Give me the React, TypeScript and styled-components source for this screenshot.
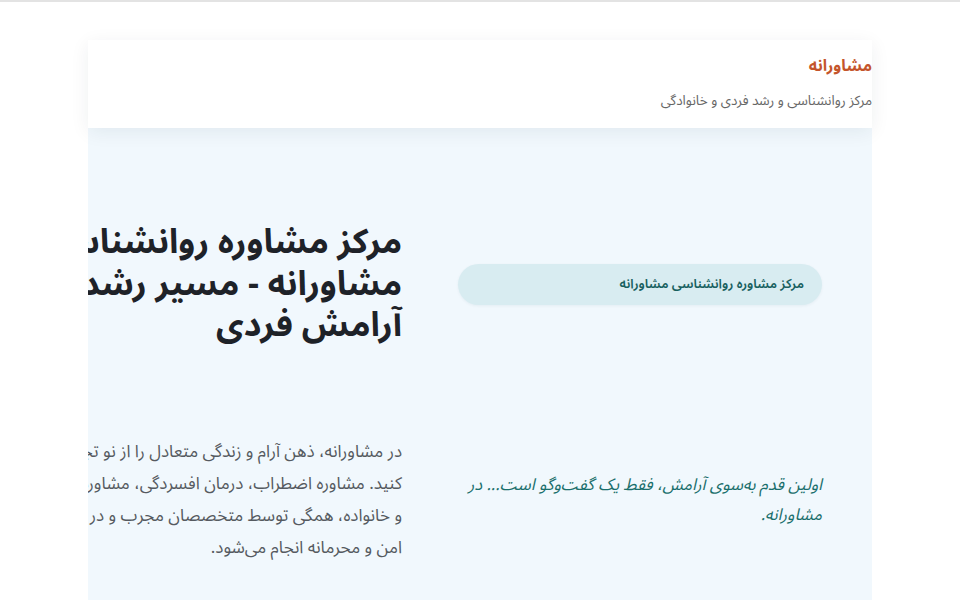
import React from 'react';
import styled, { createGlobalStyle } from 'styled-components';

const GlobalStyle = createGlobalStyle`
  html, body {
    margin: 0;
    padding: 0;
    background: #ffffff;
  }
  body {
    border-top: 2px solid #e3e3e3;
    font-family: "Noto Sans Arabic", "DejaVu Sans", sans-serif;
    direction: rtl;
    overflow: hidden;
  }
`;

const Page = styled.div`
  width: 784px;
  margin: 38px auto 0 auto;
`;

const SiteHeader = styled.header`
  position: relative;
  z-index: 1;
  background: #ffffff;
  box-shadow: 0 4px 18px rgba(20, 40, 60, 0.07);
  padding: 10px 0 15px 0;
`;

const Brand = styled.div`
  font-size: 16px;
  font-weight: 700;
  line-height: 32px;
  color: #c4552b;
`;

const Tagline = styled.div`
  font-size: 13.5px;
  line-height: 24px;
  margin-top: 7px;
  color: #666666;
`;

const Hero = styled.section`
  background: #f1f8fd;
  overflow: hidden;
  height: 480px;
  padding: 94px 50px 0 0;
  box-sizing: border-box;
`;

const HeroGrid = styled.div`
  display: grid;
  grid-template-columns: 364px 369px;
  column-gap: 56px;
  row-gap: 89px;
  align-items: center;
`;

const Title = styled.h1`
  margin: 0;
  font-size: 34px;
  font-weight: 700;
  line-height: 41.5px;
  color: #1e2228;
`;

const Badge = styled.div`
  background: #d8ecf1;
  border-radius: 21px;
  height: 41px;
  display: flex;
  align-items: center;
  padding: 0 18px;
  font-size: 13px;
  font-weight: 600;
  color: #17605f;
  box-shadow: 0 1px 3px rgba(0, 60, 80, 0.06);
`;

const Lead = styled.p`
  margin: 0;
  font-size: 17px;
  line-height: 32px;
  color: #555a60;
`;

const Quote = styled.p`
  margin: 0;
  font-size: 16.5px;
  line-height: 30px;
  font-style: italic;
  color: #1a6f6c;
`;

export default function App() {
  return (
    <>
      <GlobalStyle />
      <Page>
        <SiteHeader>
          <Brand>مشاورانه</Brand>
          <Tagline>مرکز روانشناسی و رشد فردی و خانوادگی</Tagline>
        </SiteHeader>
        <Hero>
          <HeroGrid>
            <Badge>مرکز مشاوره روانشناسی مشاورانه</Badge>
            <Title>مرکز مشاوره روانشناسی مشاورانه - مسیر رشد و آرامش فردی</Title>
            <Quote>اولین قدم به‌سوی آرامش، فقط یک گفت‌وگو است... در مشاورانه.</Quote>
            <Lead>
              در مشاورانه، ذهن آرام و زندگی متعادل را از نو تجربه کنید. مشاوره اضطراب، درمان افسردگی، مشاوره
              ازدواج و خانواده، همگی توسط متخصصان مجرب و در فضایی امن و محرمانه انجام می‌شود.
            </Lead>
          </HeroGrid>
        </Hero>
      </Page>
    </>
  );
}
